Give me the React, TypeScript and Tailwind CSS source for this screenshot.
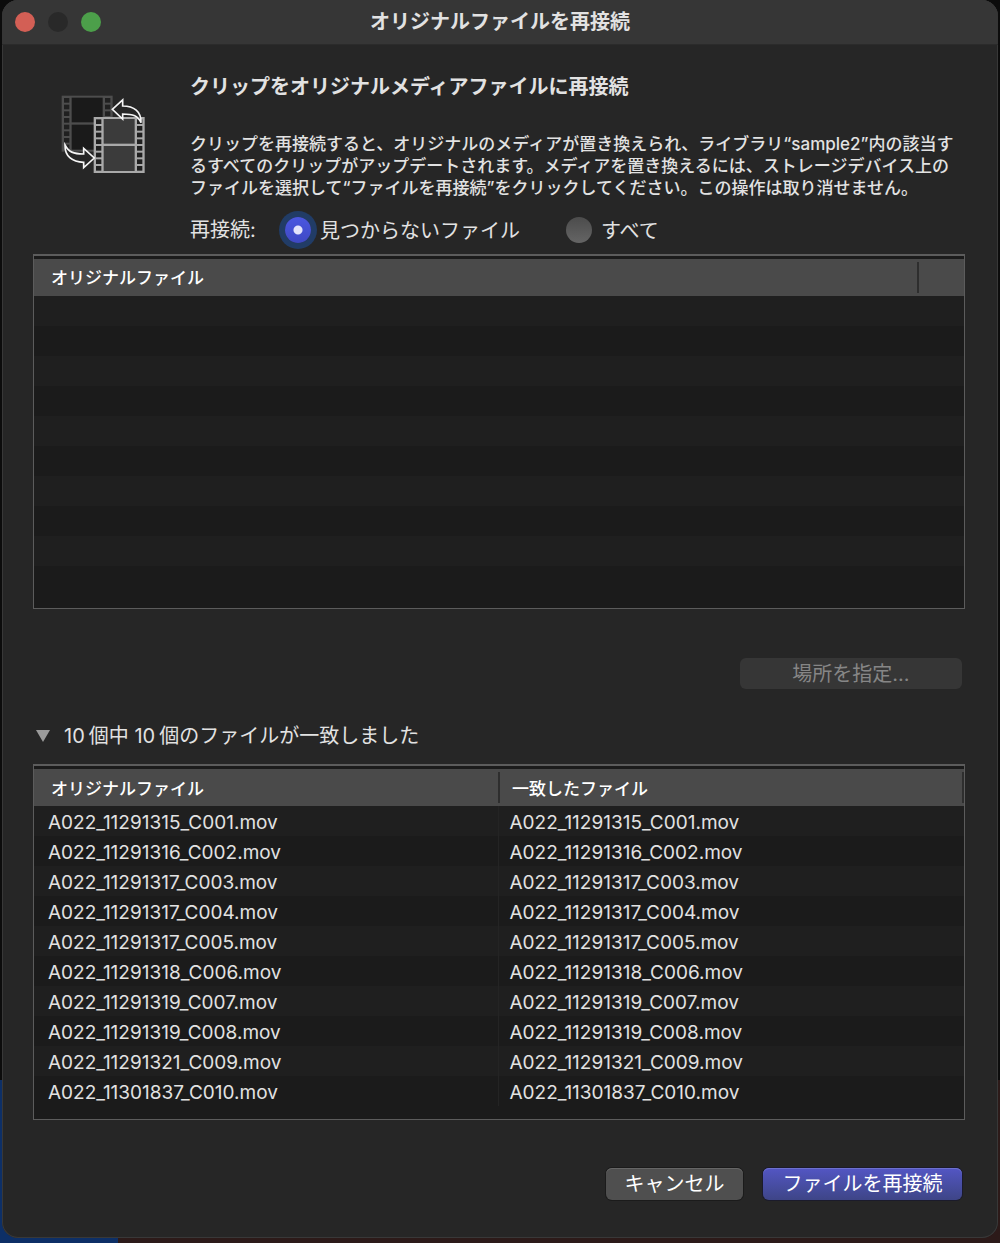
import { useState } from 'react'

const files = [
  'A022_11291315_C001.mov',
  'A022_11291316_C002.mov',
  'A022_11291317_C003.mov',
  'A022_11291317_C004.mov',
  'A022_11291317_C005.mov',
  'A022_11291318_C006.mov',
  'A022_11291319_C007.mov',
  'A022_11291319_C008.mov',
  'A022_11291321_C009.mov',
  'A022_11301837_C010.mov',
]

const emptyRows = Array.from({ length: 10 }, (_, i) => i)
const holes = [0, 1, 2, 3, 4, 5, 6, 7]

function FilmStrip({ x, y, frame, fill }: { x: number; y: number; frame: string; fill: string }) {
  return (
    <g>
      <rect x={x} y={y} width="153" height="168" fill={frame} />
      <rect x={x + 30} y={y + 6} width="93" height="74" fill={fill} />
      <rect x={x + 30} y={y + 87} width="93" height="75" fill={fill} />
      {holes.map((i) => (
        <g key={i} fill="#202020">
          <rect x={x + 7} y={y + 7 + i * 20} width="16" height="14" />
          <rect x={x + 130} y={y + 7 + i * 20} width="16" height="14" />
        </g>
      ))}
    </g>
  )
}

function ReconnectIcon() {
  return (
    <svg viewBox="33 29 255 237" className="w-[85px] h-[79px] shrink-0" aria-hidden="true">
      <FilmStrip x={35} y={31} frame="#4d4d4d" fill="#1a1a1a" />
      <FilmStrip x={131} y={95} frame="#a9a9a9" fill="#3b3b3b" />
      <g fill="#262626" stroke="#f5f5f5" strokeWidth="5" strokeLinejoin="miter">
        <path d="M187 72 L218 44 V62 C252 62 274 78 273 112 C264 92 250 86 218 86 V101 Z" />
        <path d="M133 218 L101 247 V231 C66 230 44 212 45 179 C56 200 70 206 101 206 V189 Z" />
      </g>
    </svg>
  )
}

export default function App() {
  const [target, setTarget] = useState('missing')
  const [open, setOpen] = useState(true)

  const radioClass =
    'appearance-none size-[26px] rounded-full bg-linear-to-b from-[#4c4c4c] to-[#656565] checked:bg-[radial-gradient(circle,#e4e4fb_4px,transparent_5px),linear-gradient(#4a57e0,#3f49c4)] checked:ring-[6px] checked:ring-[#213c66]'

  return (
    <div className="min-h-screen flex pl-[2px] pr-[2px] pb-[5px] bg-[linear-gradient(#0c0c0c,#0c0c0c_1080px,transparent_1080px),linear-gradient(90deg,#0d2f66_118px,#2c1a19_118px)] font-['Inter','Noto_Sans_CJK_JP',sans-serif] text-[#e2e2e2]">
      <div className="flex-1 flex flex-col rounded-[16px] overflow-hidden bg-[#262626] shadow-[inset_0_0_0_1px_#383838]">
        <header className="h-[45px] pb-px grid grid-cols-[1fr_auto_1fr] items-center px-[13px] bg-[#363636] border-b border-[#2b2b2b]">
          <div className="flex gap-[13px]">
            <button aria-label="閉じる" className="size-5 rounded-full bg-[#d35f55]" />
            <button aria-label="しまう" disabled className="size-5 rounded-full bg-[#292929]" />
            <button aria-label="拡大" className="size-5 rounded-full bg-[#4c9f4a]" />
          </div>
          <h1 className="text-[20px] leading-6 font-bold">オリジナルファイルを再接続</h1>
        </header>

        <main className="flex-1 flex flex-col pl-[31px] pr-[33px]">
          <section className="flex pt-[30px] pl-[28px]">
            <div className="pt-5">
              <ReconnectIcon />
            </div>
            <div className="ml-[44px] flex-1">
              <h2 className="text-[20px] leading-6 font-bold">クリップをオリジナルメディアファイルに再接続</h2>
              <p className="mt-[34px] text-[17px] leading-[22px] font-medium whitespace-nowrap">
                クリップを再接続すると、オリジナルのメディアが置き換えられ、ライブラリ“sample2”内の該当す
                <br />
                るすべてのクリップがアップデートされます。メディアを置き換えるには、ストレージデバイス上の
                <br />
                ファイルを選択して“ファイルを再接続”をクリックしてください。この操作は取り消せません。
              </p>
              <fieldset className="mt-4 h-[30px] flex items-center text-[20px] leading-6">
                <legend className="float-left w-[95px]">再接続:</legend>
                <label className="flex items-center gap-[9px]">
                  <input
                    type="radio"
                    name="target"
                    className={radioClass}
                    checked={target === 'missing'}
                    onChange={() => setTarget('missing')}
                  />
                  <span className="pt-0.5">見つからないファイル</span>
                </label>
                <label className="ml-[46px] flex items-center gap-[9px]">
                  <input
                    type="radio"
                    name="target"
                    className={radioClass}
                    checked={target === 'all'}
                    onChange={() => setTarget('all')}
                  />
                  <span className="pt-0.5">すべて</span>
                </label>
              </fieldset>
            </div>
          </section>

          <div className="mt-[9px] h-[355px] border border-t-2 border-[#5c5c5c] bg-[#1b1b1b] pt-[3px] overflow-hidden">
            <table className="w-full table-fixed border-collapse text-[17px]">
              <thead>
                <tr className="h-[37px] bg-[#4a4a4a] text-white">
                  <th className="pt-0.5 pl-[17px] text-left font-medium">オリジナルファイル</th>
                  <th className="w-[47px] p-0">
                    <div className="h-[31px] border-l-2 border-[#2e2e2e]" />
                  </th>
                </tr>
              </thead>
              <tbody>
                {emptyRows.map((i) => (
                  <tr key={i} className="h-[30px] odd:bg-[#1f1f1f]">
                    <td colSpan={2} />
                  </tr>
                ))}
              </tbody>
            </table>
          </div>

          <div className="mt-[49px] flex justify-end pr-[3px]">
            <button disabled className="w-[222px] h-[31px] rounded-[6px] bg-[#363636] text-[20px] leading-6 text-[#868686]">
              場所を指定...
            </button>
          </div>

          <button
            className="mt-8 h-[30px] flex items-center self-start pl-[3px] text-[20px] leading-6"
            aria-expanded={open}
            onClick={() => setOpen(!open)}
          >
            <svg viewBox="0 0 14 12" className="w-[14px] h-[12px] mr-[14px]" aria-hidden="true">
              <path d="M0 0H14L7 12Z" fill="#9b9b9b" />
            </svg>
            <span>
              <span className="mr-1">10</span>個中 <span className="mr-1">10</span>個のファイルが一致しました
            </span>
          </button>

          {open && (
            <div className="mt-[13px] h-[356px] border border-t-2 border-[#5c5c5c] bg-[#1b1b1b] pt-[3px] overflow-hidden">
              <table className="w-full table-fixed border-collapse text-[19px] leading-6">
                <thead>
                  <tr className="h-[37px] bg-[#4a4a4a] text-white text-[17px]">
                    <th className="w-[464px] pt-0.5 pb-0 pl-[17px] text-left font-medium">オリジナルファイル</th>
                    <th className="p-0 text-left font-medium">
                      <div className="h-[31px] pt-0.5 flex items-center pl-3 border-x-2 border-[#2e2e2e]">一致したファイル</div>
                    </th>
                  </tr>
                </thead>
                <tbody>
                  {files.map((file) => (
                    <tr key={file} className="h-[30px] odd:bg-[#1f1f1f]">
                      <td className="p-0 pt-1 pl-[14px]">{file}</td>
                      <td className="p-0 pt-1 pl-[11px] border-l border-[#242424]">{file}</td>
                    </tr>
                  ))}
                </tbody>
              </table>
            </div>
          )}

          <footer className="mt-[48px] flex justify-end gap-5 pr-[3px] text-[20px] leading-6 text-white">
            <button className="w-[137px] h-8 rounded-[6px] bg-[#4f4f4f] shadow-[inset_0_1px_0_#666,0_0_0_1px_#1b1b1b]">
              キャンセル
            </button>
            <button className="w-[199px] h-8 rounded-[6px] bg-linear-to-b from-[#5356c4] to-[#3e4587] shadow-[inset_0_1px_0_#6d70d0,0_0_0_1px_#1b1b2b]">
              ファイルを再接続
            </button>
          </footer>
        </main>
      </div>
    </div>
  )
}
